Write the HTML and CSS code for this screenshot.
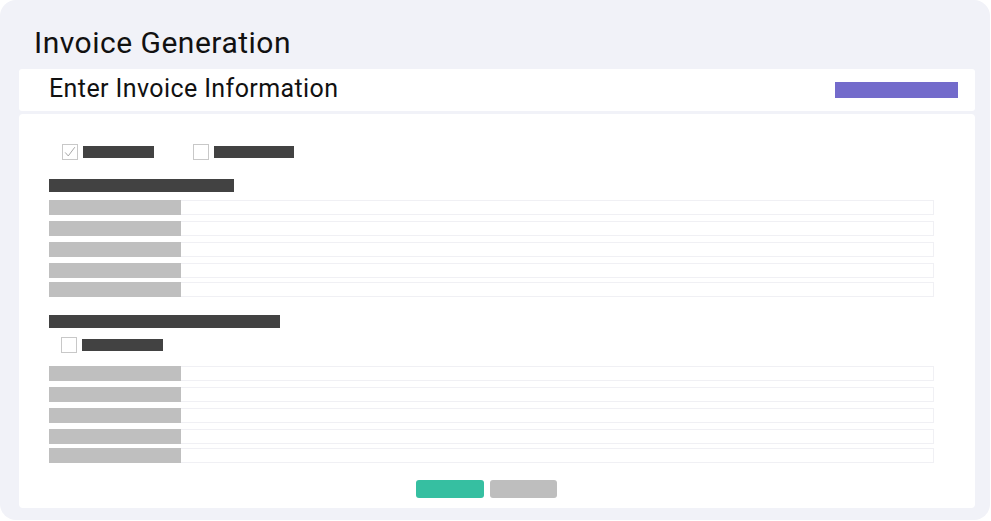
FILE: index.html
```html
<!DOCTYPE html>
<html lang="en">

<head>
    <meta charset="UTF-8">
    <title>Invoice Generation</title>
    <link rel="stylesheet" href="styles.css">
</head>

<body>
    <div class="page">
        <h1 class="page-title">Invoice Generation</h1>

        <div class="header-card">
            <h2>Enter Invoice Information</h2>
            <span class="header-button"></span>
        </div>

        <div class="form-card">
            <div class="check-row">
                <label class="check-item">
                    <span class="checkbox">
                        <svg viewBox="0 0 16 16" width="14" height="14">
                            <polyline points="2.5,8.5 6,12.5 13.5,2.5" fill="none" stroke="#9a9a9a" stroke-width="1"></polyline>
                        </svg>
                    </span>
                    <span class="bar dark w71"></span>
                </label>
                <label class="check-item">
                    <span class="checkbox"></span>
                    <span class="bar dark w80"></span>
                </label>
            </div>

            <div class="section-title w185"></div>
            <div class="field"><span class="field-label"></span></div>
            <div class="field"><span class="field-label"></span></div>
            <div class="field"><span class="field-label"></span></div>
            <div class="field"><span class="field-label"></span></div>
            <div class="field tight"><span class="field-label"></span></div>

            <div class="section-title second w231"></div>
            <div class="check-row small">
                <label class="check-item">
                    <span class="checkbox"></span>
                    <span class="bar dark w81"></span>
                </label>
            </div>
            <div class="field first"><span class="field-label"></span></div>
            <div class="field"><span class="field-label"></span></div>
            <div class="field"><span class="field-label"></span></div>
            <div class="field"><span class="field-label"></span></div>
            <div class="field tight"><span class="field-label"></span></div>

            <div class="actions">
                <button class="btn btn-save"></button>
                <button class="btn btn-cancel"></button>
            </div>
        </div>
    </div>
</body>

</html>
```

FILE: styles.css
```css
body {
    margin: 0;
    font-family: Roboto, "Liberation Sans", sans-serif;
    background-color: #ffffff;
}

.page {
    box-sizing: border-box;
    width: 990px;
    height: 520px;
    padding: 0 15px 12px 19px;
    background-color: #f1f2f8;
    border-radius: 16px;
}

.page-title {
    margin: 0 0 8px 0;
    padding: 25px 0 0 15px;
    font-size: 30px;
    line-height: 36px;
    font-weight: 400;
    letter-spacing: 0.5px;
    color: #111111;
}

.header-card {
    display: flex;
    align-items: center;
    justify-content: space-between;
    height: 42px;
    padding: 0 17px 0 30px;
    background-color: #ffffff;
    border-radius: 3px;
}

.header-card h2 {
    margin: 0 0 2px 0;
    font-size: 25px;
    line-height: 40px;
    font-weight: 400;
    letter-spacing: 0.4px;
    color: #111111;
}

.header-button {
    width: 123px;
    height: 16px;
    background-color: #736bcb;
}

.form-card {
    margin-top: 3px;
    padding: 30px 41px 10px 30px;
    background-color: #ffffff;
    border-radius: 4px;
}

.check-row {
    display: flex;
    gap: 39px;
    padding-left: 13px;
}

.check-row.small {
    padding-left: 12px;
    margin-top: 9px;
}

.check-item {
    display: flex;
    align-items: center;
    gap: 5px;
}

.checkbox {
    box-sizing: border-box;
    display: flex;
    align-items: center;
    justify-content: center;
    width: 16px;
    height: 16px;
    border: 1px solid #c8c8c8;
    background-color: #ffffff;
}

.bar {
    display: block;
    height: 12px;
}

.bar.dark {
    background-color: #424242;
}

.w71 { width: 71px; }
.w80 { width: 80px; }
.w81 { width: 81px; }
.w185 { width: 185px; }
.w231 { width: 231px; }

.section-title {
    height: 13px;
    margin-top: 19px;
    background-color: #424242;
}

.section-title.second {
    margin-top: 18px;
}

.field {
    box-sizing: border-box;
    height: 15px;
    margin-top: 6px;
    border: 1px solid #f0f0f4;
}

.section-title + .field {
    margin-top: 8px;
}

.field.first {
    margin-top: 13px;
}

.field.tight {
    margin-top: 4px;
}

.field-label {
    display: block;
    width: 132px;
    height: 15px;
    margin: -1px 0 0 -1px;
    background-color: #bfbfbf;
}

.actions {
    display: flex;
    justify-content: center;
    gap: 6px;
    margin-top: 17px;
    padding-right: 10px;
}

.btn {
    height: 18px;
    border: none;
    border-radius: 3px;
    padding: 0;
}

.btn-save {
    width: 68px;
    background-color: #36bfa1;
}

.btn-cancel {
    width: 67px;
    background-color: #bebebe;
}
```
